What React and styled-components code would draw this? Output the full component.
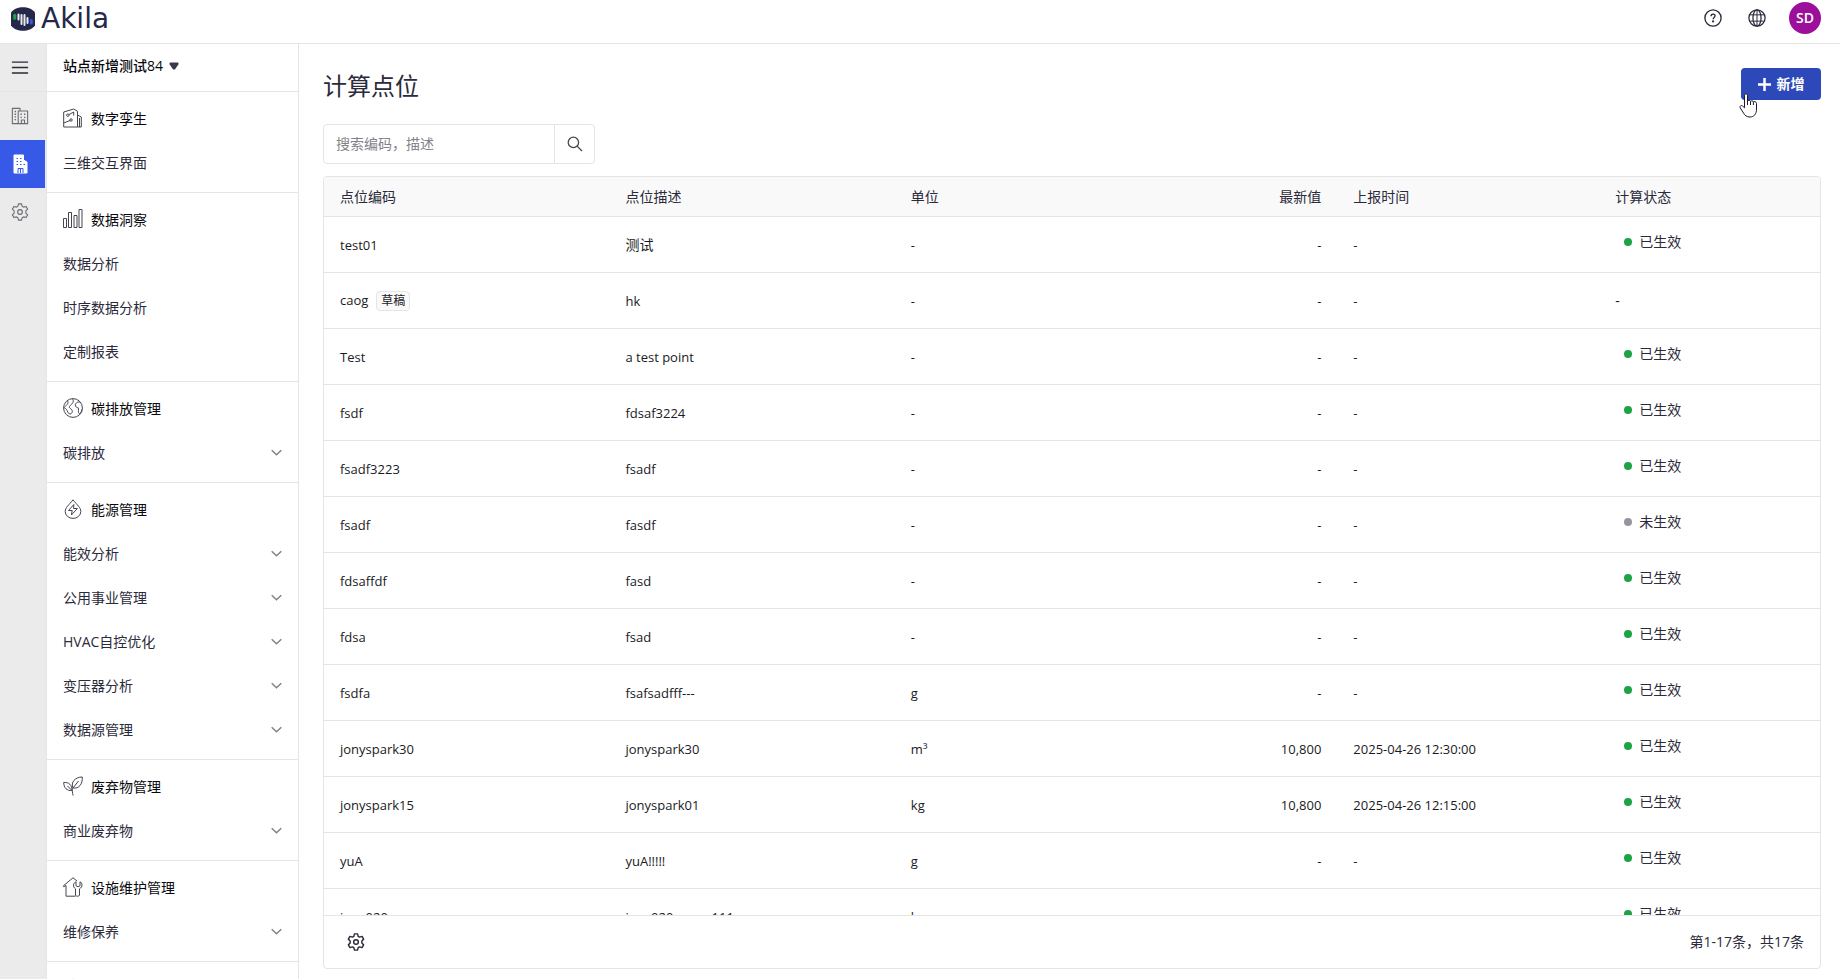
import React from "react";
import styled, { createGlobalStyle, css } from "styled-components";

const colors = {
  ink: "#2b2a3a",
  strong: "#08080d",
  icon: "#45444f",
  muted: "#82828a",
  line: "#e5e5e5",
  rail: "#ebebeb",
  head: "#f9f9f9",
  active: "#3659e8",
  primary: "#2d49b9",
  green: "#1ba345",
  grey: "#95959f",
};

const GlobalStyle = createGlobalStyle`
  *, *::before, *::after { box-sizing: border-box; }
  body {
    margin: 0;
    background: #fff;
    color: ${colors.ink};
    font: 14px/20px "Open Sans", "Noto Sans CJK SC", sans-serif;
  }
  button, input { font: inherit; color: inherit; }
  h1, h2 { margin: 0; }
  a { color: inherit; text-decoration: none; }
`;

const plainButton = css`
  border: 0;
  padding: 0;
  background: none;
  cursor: pointer;
`;

const Page = styled.div`
  display: flex;
  flex-direction: column;
  height: 100vh;
  overflow: hidden;
`;

const TopBar = styled.header`
  flex: none;
  display: flex;
  align-items: center;
  justify-content: space-between;
  height: 44px;
  padding: 0 19px 8px 11px;
  border-bottom: 1px solid ${colors.line};
`;

const Brand = styled.a`
  display: flex;
  align-items: center;
  gap: 6px;
  padding-top: 2px;
  color: #252849;
  font: 28px/24px "DejaVu Sans", sans-serif;
`;

const TopActions = styled.div`
  display: flex;
  align-items: center;
`;

const TopButton = styled.button`
  ${plainButton}
  display: flex;
  margin-right: ${(p) => (p.$wide ? 26 : 23)}px;
`;

const Avatar = styled.button`
  ${plainButton}
  width: 32px;
  height: 32px;
  border-radius: 50%;
  background: #9b0f9b;
  color: #fff;
  font-weight: 600;
`;

const Body = styled.div`
  flex: 1;
  min-height: 0;
  display: flex;
`;

const Rail = styled.nav`
  flex: none;
  width: 47px;
  background: ${colors.rail};
  border-right: 1px solid ${colors.line};
`;

const RailButton = styled.button`
  ${plainButton}
  display: flex;
  align-items: center;
  width: ${(p) => (p.$divided ? "46px" : "45px")};
  height: 48px;
  padding-left: 11px;
  border-bottom: ${(p) => (p.$divided ? `1px solid ${colors.line}` : "0")};
  color: ${(p) => (p.$active ? "#fff" : p.$divided ? colors.ink : "#6a6a72")};
  background: ${(p) => (p.$active ? colors.active : "transparent")};
`;

const Sidebar = styled.nav`
  flex: none;
  width: 252px;
  overflow: hidden;
  border-right: 1px solid ${colors.line};
`;

const SitePicker = styled.button`
  ${plainButton}
  display: flex;
  align-items: center;
  gap: 6px;
  width: 100%;
  height: 48px;
  padding: 0 16px 4px;
  border-bottom: 1px solid ${colors.line};
  color: ${colors.strong};
  font-weight: 500;
`;

const Section = styled.section`
  padding: 5px 16px 7px;
  border-bottom: 1px solid ${colors.line};
`;

const SectionTitle = styled.h2`
  display: flex;
  align-items: center;
  gap: 8px;
  height: 44px;
  color: ${colors.strong};
  font-size: 14px;
  font-weight: 400;

  svg {
    margin-bottom: 2px;
    color: ${colors.icon};
  }
`;

const MenuItem = styled.a`
  display: flex;
  align-items: center;
  justify-content: space-between;
  height: 44px;
`;

const Main = styled.main`
  flex: 1;
  min-width: 0;
  display: flex;
  flex-direction: column;
  padding: 24px 19px 10px 24px;
`;

const TitleRow = styled.div`
  flex: none;
  display: flex;
  justify-content: space-between;
  align-items: flex-start;
  margin-bottom: 20px;
`;

const Title = styled.h1`
  font-size: 24px;
  line-height: 36px;
  font-weight: 400;
`;

const AddButton = styled.button`
  ${plainButton}
  position: relative;
  display: flex;
  align-items: center;
  justify-content: center;
  gap: 6px;
  width: 80px;
  height: 32px;
  border-radius: 4px;
  background: ${colors.primary};
  color: #fff;
  font-weight: 700;
`;

const Pointer = styled.svg`
  position: absolute;
  left: -2px;
  top: 25px;
`;

const Search = styled.form`
  flex: none;
  display: flex;
  width: 272px;
  height: 40px;
  margin-bottom: 12px;
  border: 1px solid ${colors.line};
  border-radius: 4px;
`;

const SearchInput = styled.input`
  flex: 1;
  min-width: 0;
  padding: 0 12px;
  border: 0;
  border-right: 1px solid ${colors.line};
  background: none;
  outline: none;
  &::placeholder { color: ${colors.muted}; opacity: 1; }
`;

const SearchButton = styled.button`
  ${plainButton}
  display: flex;
  align-items: center;
  justify-content: center;
  width: 39px;
  color: ${colors.icon};
`;

const Panel = styled.div`
  flex: 1;
  min-height: 0;
  display: flex;
  flex-direction: column;
  overflow: hidden;
  border: 1px solid ${colors.line};
  border-radius: 4px;
`;

const Scroller = styled.div`
  flex: 1;
  min-height: 0;
  overflow-y: auto;
  scrollbar-width: none;
`;

const Table = styled.table`
  width: 100%;
  table-layout: fixed;
  border-collapse: separate;
  border-spacing: 0;
`;

const Col = styled.col`
  width: ${(p) => p.$width};
`;

const HeadCell = styled.th`
  position: sticky;
  top: 0;
  z-index: 1;
  height: 40px;
  padding: 0 16px;
  border-bottom: 1px solid ${colors.line};
  background: ${colors.head};
  font-weight: 400;
  text-align: ${(p) => (p.$end ? "right" : "left")};
`;

const Cell = styled.td`
  height: 56px;
  padding: 0 16px;
  border-bottom: 1px solid ${colors.line};
  color: #1a1a24;
  font-size: ${(p) => (p.$cjk ? 14 : 13)}px;
  text-align: ${(p) => (p.$end ? "right" : "left")};
`;

const Tag = styled.span`
  display: inline-block;
  height: 20px;
  margin-left: 8px;
  padding: 0 4px;
  border: 1px solid ${colors.line};
  border-radius: 4px;
  background: ${colors.head};
  font-size: 12px;
  line-height: 18px;
`;

const Status = styled.span`
  display: flex;
  align-items: center;
  gap: 7px;
  padding: 0 8px 6px 9px;
  color: ${colors.ink};
  &::before {
    content: "";
    width: 8px;
    height: 8px;
    border-radius: 50%;
    background: ${(p) => (p.$on ? colors.green : colors.grey)};
  }
`;

const Footer = styled.footer`
  flex: none;
  display: flex;
  align-items: center;
  justify-content: space-between;
  height: 53px;
  padding: 0 16px;
  border-top: 1px solid ${colors.line};
`;

const ToolButton = styled.button`
  ${plainButton}
  display: flex;
  align-items: center;
  justify-content: center;
  width: 32px;
  height: 32px;
`;

const Svg = ({ size = 20, stroke = 1, children, ...rest }) => (
  <svg
    width={size}
    height={size}
    viewBox="0 0 20 20"
    fill="none"
    stroke="currentColor"
    strokeWidth={stroke}
    strokeLinejoin="round"
    aria-hidden="true"
    {...rest}
  >
    {children}
  </svg>
);

const LogoMark = () => (
  <svg width="24" height="24" viewBox="0 0 24 24" aria-hidden="true">
    <path d="M0 5.500C5-1.500 19-1.500 24 5.500V18.500C19 25.500 5 25.500 0 18.500Z" fill="#252849" />
    <g strokeWidth="2" strokeLinecap="round">
      <path d="M3.700 8.200v3" stroke="#1ba345" strokeWidth="3" />
      <path d="M7.500 7.500v5M10.500 8v9M13.500 8v10M16.500 11v5" stroke="#e9e9f2" />
      <path d="M20.300 13.500v2.600" stroke="#3659e8" strokeWidth="3" />
    </g>
  </svg>
);

const HelpIcon = () => (
  <Svg size={18} stroke={1.5}>
    <circle cx="10" cy="10" r="9" />
    <path d="M7.800 8c0-3 4.500-3 4.500-.4 0 1.800-2.200 1.700-2.200 3.800" />
    <circle cx="10.100" cy="13.800" r=".5" fill="currentColor" stroke="currentColor" />
  </Svg>
);

const GlobeIcon = () => (
  <Svg size={18} stroke={1.400}>
    <circle cx="10" cy="10" r="9" />
    <ellipse cx="10" cy="10" rx="4.500" ry="9" />
    <path d="M1.800 6.500h16.400M1.800 13.500h16.400M10 1v18" strokeWidth="1.100" />
  </Svg>
);

const GearIcon = ({ stroke }) => (
  <Svg size={18} stroke={stroke}>
    <path d="M8.300 1h3.400l.7 2.700 1.500.9 2.800-.8 1.800 3-2 2v2.400l2 2-1.800 3-2.800-.8-1.500.9-.7 2.700H8.300l-.7-2.700-1.500-.9-2.800.8-1.800-3 2-2V8.800l-2-2 1.800-3 2.800.8 1.500-.9Z" />
    <circle cx="10" cy="10" r="2.600" />
  </Svg>
);

const MenuIcon = () => (
  <Svg size={18} stroke={1.600}>
    <path d="M1 3.500h18M1 9.500h18M1 15.500h18" />
  </Svg>
);

const BuildingsIcon = () => (
  <Svg size={18} stroke={1.200}>
    <path d="M8 18.500H1.500v-17H10v3M8 18.500v-14h10.500v14ZM11.500 18.500v-4h3.500v4" />
    <path d="M4 5h1.500M4 8h1.500M4 11h1.500M4 14h1.500M10.500 8H12M14.500 8H16M10.500 11.500H12M14.500 11.500H16" strokeWidth="1.500" />
  </Svg>
);

const BuildingIcon = () => (
  <Svg size={20} stroke={1}>
    <path d="M3 1h9.500v5L16 8v11H3Z" fill="currentColor" />
    <path d="M5.500 4.500H7M9 4.500h1.500M5.500 7.500H7M9 7.500h1.500M5.500 10.500H7M9 10.500h1.500M12.500 10.500H14M7 19v-4.500h5V19M9.500 14.500V19" stroke={colors.active} />
  </Svg>
);

const TwinIcon = () => (
  <Svg>
    <path d="M.7 19V4l10-3 3.800 2.300V19ZM14.500 7l3.800 2v10h-3.800M16.500 10v9" />
    <circle cx="4.800" cy="7.200" r="1.200" />
    <circle cx="8" cy="12" r="1.200" />
    <path d="M6 6.600 10.700 4v3.500M.7 15l6.300-2.500" />
  </Svg>
);

const BarsIcon = () => (
  <Svg>
    <path d="M.5 9.500h3v9h-3ZM5.500 3.500h3v15h-3ZM11 6.500h3v12h-3ZM16 .5h3v18h-3Z" />
  </Svg>
);

const CarbonIcon = () => (
  <Svg>
    <circle cx="10" cy="10" r="9.400" />
    <path d="M9.500.8C11 3.500 10 5 8 6.800S5.500 9.300 8 11s1 5-1 5-2.500-3-3.500-4.500S1 10 .8 9M4.500 3c1.500 2-.5 4-2.500 5.500" />
    <path d="M17 4c-2.500-.5-5.500 1.500-4.500 4s3 .5 3 3-.5 3.500.5 4.500 2.500-1.500 3-4" />
  </Svg>
);

const EnergyIcon = () => (
  <Svg>
    <path d="M10 .8C6 6 2.200 8.500 2.200 12.500a7.800 6.900 0 0 0 15.600 0C17.800 8.500 14 6 10 .8Z" />
    <path d="M10.800 5.500 5.500 11.500h3.700l-.8 4.500 6-6.500h-3.800Z" />
  </Svg>
);

const LeafIcon = () => (
  <Svg>
    <path d="M10 12C7.500 6.500 12 1 19.300 1c.5 7-3.300 12-9.300 11Zm0 0 5.500-7M10 19.500c-1-6-1-7 0-7.500" />
    <path d="M9 14.500C4 15 .8 12 .7 6.500 6 6 9 9 9 14.500ZM9 14.500 4.500 10" />
  </Svg>
);

const HouseIcon = () => (
  <Svg>
    <path d="M12.500 19.200H3V8.500L.7 9.700 .5 8.700 10 .8l4 3.200" />
    <path d="M13 4.800c-3 1.200-3.500 5.200-.5 7v6.500c0 1.200 4 1.200 4 0v-6.500c3.500-1.800 3-6 .5-7v4l-2 1-2-1Z" />
  </Svg>
);

const PeakIcon = () => (
  <Svg>
    <path d="M1 19V9L10 1l9 8v10Z" />
  </Svg>
);

const Chevron = () => (
  <svg width="11" height="8" viewBox="0 0 11 8" fill="none" stroke={colors.muted} strokeWidth="1.500" aria-hidden="true">
    <path d="m.7 1.200 4.800 4.600 4.800-4.600" />
  </svg>
);

const Caret = () => (
  <svg width="10" height="8" viewBox="0 0 10 8" aria-hidden="true">
    <path d="M1 .5h8l.7 1.500L5.900 7.500H4.100L.3 2Z" fill="#3a3947" />
  </svg>
);

const sections = [
  { title: "数字孪生", Icon: TwinIcon, items: ["三维交互界面"] },
  { title: "数据洞察", Icon: BarsIcon, items: ["数据分析", "时序数据分析", "定制报表"] },
  { title: "碳排放管理", Icon: CarbonIcon, nested: true, items: ["碳排放"] },
  {
    title: "能源管理",
    Icon: EnergyIcon,
    nested: true,
    items: ["能效分析", "公用事业管理", "HVAC自控优化", "变压器分析", "数据源管理"],
  },
  { title: "废弃物管理", Icon: LeafIcon, nested: true, items: ["商业废弃物"] },
  { title: "设施维护管理", Icon: HouseIcon, nested: true, items: ["维修保养"] },
  { title: "", Icon: PeakIcon, items: [] },
];

const columns = [
  { label: "点位编码", width: "19.08%" },
  { label: "点位描述", width: "19.08%" },
  { label: "单位", width: "19.08%" },
  { label: "最新值", width: "10.5%", end: true },
  { label: "上报时间", width: "17.5%" },
  { label: "计算状态", width: "auto" },
];

const rows = [
  { code: "test01", desc: "测试", cjk: true, status: "on" },
  { code: "caog", draft: true, desc: "hk" },
  { code: "Test", desc: "a test point", status: "on" },
  { code: "fsdf", desc: "fdsaf3224", status: "on" },
  { code: "fsadf3223", desc: "fsadf", status: "on" },
  { code: "fsadf", desc: "fasdf", status: "off" },
  { code: "fdsaffdf", desc: "fasd", status: "on" },
  { code: "fdsa", desc: "fsad", status: "on" },
  { code: "fsdfa", desc: "fsafsadfff---", unit: "g", status: "on" },
  { code: "jonyspark30", desc: "jonyspark30", unit: "m³", value: "10,800", time: "2025-04-26 12:30:00", status: "on" },
  { code: "jonyspark15", desc: "jonyspark01", unit: "kg", value: "10,800", time: "2025-04-26 12:15:00", status: "on" },
  { code: "yuA", desc: "yuA!!!!!", unit: "g", status: "on" },
  { code: "jony020", desc: "jony020 space111", unit: "kg", status: "on" },
];

export default function App() {
  return (
    <Page>
      <GlobalStyle />
      <TopBar>
        <Brand href="#">
          <LogoMark />
          Akila
        </Brand>
        <TopActions>
          <TopButton type="button" aria-label="帮助" $wide>
            <HelpIcon />
          </TopButton>
          <TopButton type="button" aria-label="语言">
            <GlobeIcon />
          </TopButton>
          <Avatar type="button">SD</Avatar>
        </TopActions>
      </TopBar>
      <Body>
        <Rail>
          <RailButton type="button" aria-label="菜单" $divided><MenuIcon /></RailButton>
          <RailButton type="button" aria-label="组合"><BuildingsIcon /></RailButton>
          <RailButton type="button" aria-label="站点" $active><BuildingIcon /></RailButton>
          <RailButton type="button" aria-label="设置"><GearIcon stroke={1.200} /></RailButton>
        </Rail>
        <Sidebar>
          <SitePicker type="button">
            站点新增测试84
            <Caret />
          </SitePicker>
          {sections.map(({ title, Icon, items, nested }) => (
            <Section key={title}>
              <SectionTitle>
                <Icon />
                {title}
              </SectionTitle>
              {items.map((item) => (
                <MenuItem key={item} href="#">
                  {item}
                  {nested && <Chevron />}
                </MenuItem>
              ))}
            </Section>
          ))}
        </Sidebar>
        <Main>
          <TitleRow>
            <Title>计算点位</Title>
            <AddButton type="button">
              <svg width="13" height="13" viewBox="0 0 13 13" stroke="#fff" strokeWidth="2.500" aria-hidden="true">
                <path d="M6.500 0v13M0 6.500h13" />
              </svg>
              新增
              <Pointer width="20" height="25" viewBox="0 0 20 25" aria-hidden="true">
                <path
                  d="M5.500 2.200c0-1.900 3-1.900 3 0v6c.3-1.400 2.800-1.400 3 .3.500-1.200 2.700-1 2.900.6.600-1 3.100-.6 3.100 1.400V16c0 5-2.500 8-6.500 8-3.500 0-5-1.500-6.500-4L1.300 15c-1-2 1-3.200 2.500-1.800l1.700 1.600Z"
                  fill="#fff"
                  stroke="#1c1b28"
                />
                <path d="M8.500 8v4M11.500 8.500V12M14.400 9v3" stroke="#1c1b28" />
              </Pointer>
            </AddButton>
          </TitleRow>
          <Search onSubmit={(e) => e.preventDefault()}>
            <SearchInput type="text" aria-label="搜索" placeholder="搜索编码，描述" />
            <SearchButton type="submit" aria-label="搜索">
              <Svg size={16} stroke={1.600}>
                <circle cx="8" cy="8" r="6.500" />
                <path d="m12.700 12.700 6 6" />
              </Svg>
            </SearchButton>
          </Search>
          <Panel>
            <Scroller>
              <Table>
                <colgroup>
                  {columns.map((c) => (
                    <Col key={c.label} $width={c.width} />
                  ))}
                </colgroup>
                <thead>
                  <tr>
                    {columns.map((c) => (
                      <HeadCell key={c.label} scope="col" $end={c.end}>{c.label}</HeadCell>
                    ))}
                  </tr>
                </thead>
                <tbody>
                  {rows.map((r) => (
                    <tr key={r.code}>
                      <Cell>
                        {r.code}
                        {r.draft && <Tag>草稿</Tag>}
                      </Cell>
                      <Cell $cjk={r.cjk}>{r.desc}</Cell>
                      <Cell>{r.unit || "-"}</Cell>
                      <Cell $end>{r.value || "-"}</Cell>
                      <Cell>{r.time || "-"}</Cell>
                      <Cell $cjk>
                        {r.status ? (
                          <Status $on={r.status === "on"}>{r.status === "on" ? "已生效" : "未生效"}</Status>
                        ) : (
                          "-"
                        )}
                      </Cell>
                    </tr>
                  ))}
                </tbody>
              </Table>
            </Scroller>
            <Footer>
              <ToolButton type="button" aria-label="表格设置">
                <GearIcon stroke={1.600} />
              </ToolButton>
              第1-17条，共17条
            </Footer>
          </Panel>
        </Main>
      </Body>
    </Page>
  );
}
